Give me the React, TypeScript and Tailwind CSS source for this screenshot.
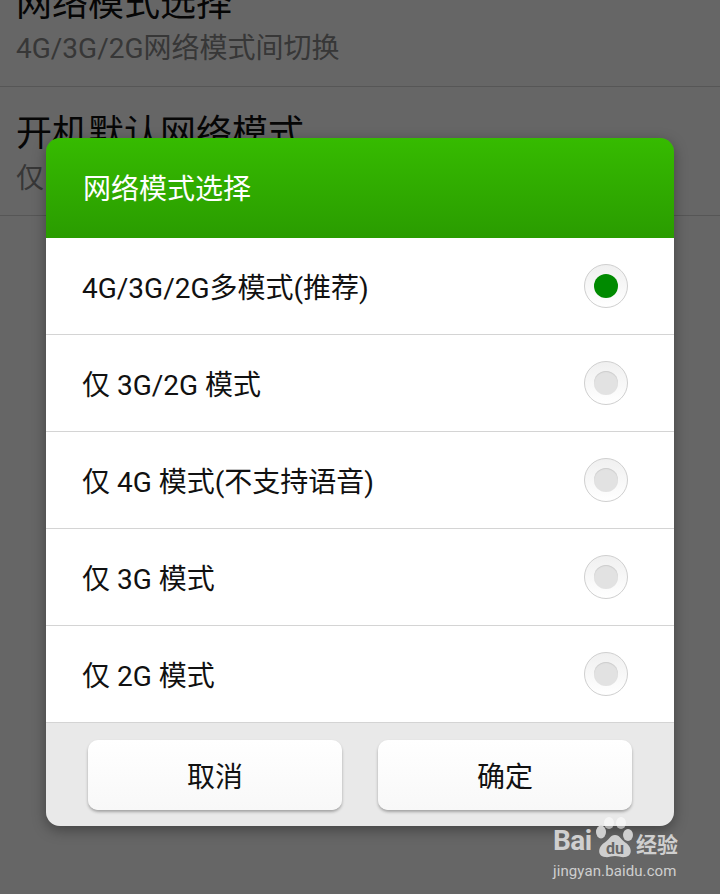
const options = [
  { label: "4G/3G/2G多模式(推荐)", checked: true },
  { label: "仅 3G/2G 模式", checked: false },
  { label: "仅 4G 模式(不支持语音)", checked: false },
  { label: "仅 3G 模式", checked: false },
  { label: "仅 2G 模式", checked: false },
];

function Radio({ checked }: { checked: boolean }) {
  return (
    <div className="flex h-[44px] w-[44px] items-center justify-center rounded-full border border-[#cfcfcf] bg-gradient-to-b from-[#f0f0f0] to-white">
      <div
        className={
          checked
            ? "h-[24px] w-[24px] rounded-full bg-[#008a00]"
            : "h-[24px] w-[24px] rounded-full bg-[#e2e2e2] shadow-[inset_0_1px_1px_#cccccc]"
        }
      />
    </div>
  );
}

function Watermark() {
  return (
    <div className="absolute left-[553px] top-[817px] flex w-[127px] flex-col text-[#cfcfcf] whitespace-nowrap">
      <div className="flex h-[41px] items-end">
        <span className="w-[43px] text-[28px] font-bold leading-[34px] tracking-[-0.5px]">Bai</span>
        <svg width="38" height="41" viewBox="0 0 38 41" className="shrink-0">
          <ellipse cx="13" cy="6" rx="5" ry="6" fill="#ffffff" fillOpacity="0.55" />
          <ellipse cx="25" cy="6" rx="5" ry="6" fill="#ffffff" fillOpacity="0.55" />
          <ellipse cx="5" cy="15" rx="5" ry="6.5" fill="#cfcfcf" />
          <ellipse cx="32" cy="18" rx="5" ry="6" fill="#cfcfcf" />
          <path d="M19 18c5 0 6 5 11 8 6 4 7 13-1 14-4 .6-6-1-10-1s-6 1.600-10 1c-8-1-7-10-1-14 5-3 6-8 11-8z" fill="#cfcfcf" />
          <text x="19" y="37" textAnchor="middle" fontSize="16" fontWeight="700" fill="#666666" fontFamily="Roboto, sans-serif">du</text>
        </svg>
        <span className="ml-[2px] text-[21px] font-bold leading-[26px]">经验</span>
      </div>
      <span className="mt-[3px] text-[15px] leading-[20px] tracking-[0.1px]">jingyan.baidu.com</span>
    </div>
  );
}

export default function App() {
  return (
    <div className="relative h-[894px] w-[720px] overflow-hidden bg-white font-['Roboto','Noto_Sans_CJK_SC',sans-serif]">
      {/* Settings list behind the dialog */}
      <div className="mt-[-43px]">
        <div className="h-[130px] border-b border-[#d6d6d6] px-[16px] pt-[24px]">
          <p className="text-[36px] leading-[46px] text-[#111]">网络模式选择</p>
          <p className="mt-[4px] text-[28px] leading-[36px] text-[#8a8a8a]">4G/3G/2G网络模式间切换</p>
        </div>
        <div className="h-[129px] border-b border-[#d6d6d6] px-[16px] pt-[24px]">
          <p className="text-[36px] leading-[46px] text-[#111]">开机默认网络模式</p>
          <p className="mt-[4px] text-[28px] leading-[36px] text-[#8a8a8a]">仅 4G/3G/2G</p>
        </div>
      </div>

      {/* Dim overlay + dialog */}
      <div className="absolute inset-0 bg-black/60 pt-[138px]">
        <div className="mx-[46px] overflow-hidden rounded-[14px] shadow-[0_4px_14px_rgba(0,0,0,0.35)]">
          <div className="flex h-[100px] items-center bg-gradient-to-b from-[#36bb00] to-[#2a9c00] pl-[37px] pr-[36px] pt-[4px] text-[28px] text-white">
            网络模式选择
          </div>
          <div className="bg-white">
            {options.map((o) => (
              <div
                key={o.label}
                className="flex h-[97px] items-center justify-between border-b border-[#d4d4d4] pl-[36px] pr-[46px] text-[28px] text-[#111]"
              >
                <span className="pt-[6px]">{o.label}</span>
                <Radio checked={o.checked} />
              </div>
            ))}
          </div>
          <div className="flex h-[103px] gap-[36px] bg-[#e9e9e9] px-[42px] pt-[17px]">
            <button className="h-[70px] w-[254px] rounded-[10px] bg-gradient-to-b from-white to-[#f8f8f8] pt-[6px] text-[28px] text-[#111] shadow-[0_2px_3px_rgba(0,0,0,0.3)]">
              取消
            </button>
            <button className="h-[70px] w-[254px] rounded-[10px] bg-gradient-to-b from-white to-[#f8f8f8] pt-[6px] text-[28px] text-[#111] shadow-[0_2px_3px_rgba(0,0,0,0.3)]">
              确定
            </button>
          </div>
        </div>
      </div>

      <Watermark />
    </div>
  );
}
